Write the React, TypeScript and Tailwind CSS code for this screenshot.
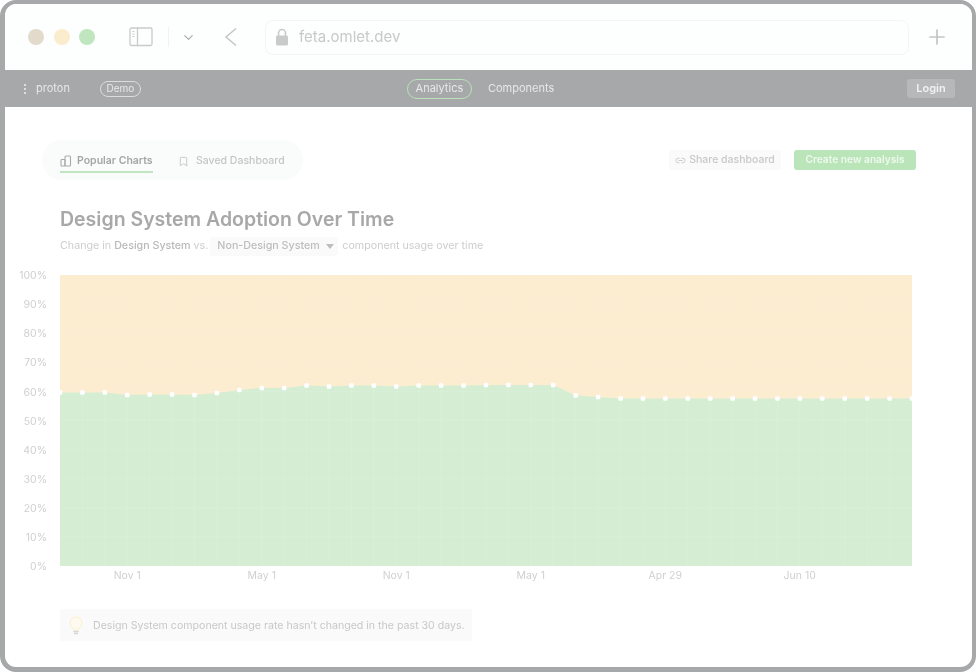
import { Bookmark, ChevronDown, Link2, Plus } from "lucide-react";

const chartValues = [
  392.5, 392.5, 392.5, 395, 394.5, 394.5, 395, 393, 390, 388, 388, 385.5, 386.5, 385.5, 385.5, 386.5, 385.5,
  385.5, 385.5, 385, 385, 385, 385, 395.5, 397, 398.5, 398.5, 398.5, 398.5, 398.5, 398.5, 398.5, 398.5, 398.5,
  398.5, 398.5, 398.5, 398.5, 398.5,
];
const yLabels = ["100%", "90%", "80%", "70%", "60%", "50%", "40%", "30%", "20%", "10%", "0%"];
const xLabels = ["Nov 1", "May 1", "Nov 1", "May 1", "Apr 29", "Jun 10"];

const CHART_W = 852;
const CHART_H = 291;
const STEP = CHART_W / 38;
const TOP = 275;

function AdoptionChart() {
  const points = chartValues.map((y, i) => [i * STEP, y - TOP]);
  const line = points.map(([x, y]) => `${x},${y}`).join(" ");
  return (
    <svg width={CHART_W + 4} height={CHART_H} viewBox={`0 0 ${CHART_W + 4} ${CHART_H}`} className="block overflow-visible">
      <rect width={CHART_W} height={CHART_H} fill="#fcecd0" />
      <polygon points={`0,${CHART_H} ${line} ${CHART_W},${CHART_H}`} fill="#d5eed3" />
      {points.map(([x], i) => (
        <line key={i} x1={x} x2={x} y1={0} y2={CHART_H} stroke="#ffffff" strokeOpacity={0.1} />
      ))}
      {yLabels.map((_, i) => (
        <line key={i} x1={0} x2={CHART_W} y1={(CHART_H / 10) * i} y2={(CHART_H / 10) * i} stroke="#ffffff" strokeOpacity={0.1} />
      ))}
      {points.map(([x, y], i) => (
        <rect key={i} x={x - 2.25} y={y - 2.25} width={4.5} height={4.5} rx={1} fill="#ffffff" />
      ))}
    </svg>
  );
}

function SidebarIcon() {
  return (
    <svg width="24" height="20" viewBox="0 0 24 20" fill="none" stroke="#c9caca" strokeWidth="1.3">
      <rect x="1" y="1" width="22" height="17.5" rx="1.5" />
      <path d="M8.5 1v17.5" />
      <path d="M3.5 4.5h2M3.5 7h2M3.5 9.500h2" strokeWidth="1" />
    </svg>
  );
}

function LockIcon() {
  return (
    <svg width="14" height="18" viewBox="0 0 14 18" fill="none">
      <path d="M3.500 8V5a3.500 3.500 0 0 1 7 0v3" stroke="#c9caca" strokeWidth="1.600" />
      <rect x="1" y="7.500" width="12" height="10" rx="1.500" fill="#c9caca" />
    </svg>
  );
}

function ChartIcon() {
  return (
    <svg width="12" height="12" viewBox="0 0 12 12" fill="none" stroke="#a9a9a9" strokeWidth="1.100">
      <rect x="1" y="4.500" width="4" height="6.500" rx="0.800" />
      <rect x="5" y="1" width="5.500" height="10" rx="1" />
    </svg>
  );
}

function BulbIcon() {
  return (
    <svg width="14" height="20" viewBox="0 0 14 20" fill="none">
      <path d="M7 1a6 6 0 0 0-3.500 10.800c.7.600 1 1.300 1 2.200h5c0-.9.300-1.600 1-2.200A6 6 0 0 0 7 1z" fill="#fefaf0" stroke="#fbeecd" />
      <path d="M5 15.500h4M5.500 17.500h3" stroke="#d5d5d5" strokeWidth="1.400" strokeLinecap="round" />
    </svg>
  );
}

function BrowserBar() {
  return (
    <div className="flex h-[66px] items-center bg-[#fdfefe] pl-[23px] pr-[21px]">
      <div className="flex gap-[9.500px]">
        <div className="h-4 w-4 rounded-full bg-[#e2dacb]" />
        <div className="h-4 w-4 rounded-full bg-[#fbeccd]" />
        <div className="h-4 w-4 rounded-full bg-[#bfe6bf]" />
      </div>
      <div className="ml-[34px]">
        <SidebarIcon />
      </div>
      <div className="ml-[15px] h-5 w-px bg-[#f1f2f2]" />
      <ChevronDown size={15} strokeWidth={1.8} color="#a9aaaa" className="ml-[12px]" />
      <svg width="14" height="20" viewBox="0 0 14 20" fill="none" stroke="#c4c5c5" strokeWidth="1.500" className="ml-[28px]">
        <path d="M12 1.500 2 10l10 8.500" />
      </svg>
      <div className="ml-[27px] flex h-[35px] w-[644px] items-center rounded-lg border border-[#f3f4f4] pl-[9px]">
        <LockIcon />
        <span className="ml-[10px] text-[15px] text-[#c8c9c9]">feta.omlet.dev</span>
      </div>
      <Plus size={24} strokeWidth={1.7} color="#c4c5c5" className="ml-4" />
    </div>
  );
}

function NavBar() {
  return (
    <div className="relative flex h-[37px] items-center bg-[#a7a8a9] pl-[19px] pr-[17px] text-[11px] text-[#e8e8e8]">
      <div className="flex flex-col gap-[2px]">
        <div className="h-[2px] w-[2px] bg-[#dddddd]" />
        <div className="h-[2px] w-[2px] bg-[#dddddd]" />
        <div className="h-[2px] w-[2px] bg-[#dddddd]" />
      </div>
      <span className="ml-[10px]">proton</span>
      <span className="ml-[30px] flex h-[16px] w-[41px] items-center justify-center rounded-full border border-[#dcdcdc] text-[10px]">Demo</span>
      <span className="ml-[266px] flex h-5 w-[65px] items-center justify-center rounded-full border-[1.5px] border-[#b9e3b9]">Analytics</span>
      <span className="ml-4">Components</span>
      <span className="ml-auto flex h-[19px] w-12 items-center justify-center rounded-[3px] bg-[#b7b8b9] font-semibold text-[#f1f1f1]">Login</span>
    </div>
  );
}

function Toolbar() {
  return (
    <div className="flex items-center justify-between pl-[37px] pr-[56px] pt-[33px]">
      <div className="flex h-10 w-[261px] items-start whitespace-nowrap rounded-full bg-[#fafcfb] pl-[18px] text-[10.500px] font-medium">
        <div className="flex h-[33px] w-[93px] items-center gap-[5px] border-b-[2px] border-[#bfe6bf] pt-[11px] text-[#a5a5a5]">
          <ChartIcon />
          <span className="font-semibold">Popular Charts</span>
        </div>
        <div className="ml-[25px] flex h-[33px] items-center gap-[7px] pt-[9px] text-[#c5c5c5]">
          <Bookmark size={11} color="#c5c5c5" />
          <span>Saved Dashboard</span>
        </div>
      </div>
      <div className="flex items-center gap-[13px] text-[10.500px] font-medium">
        <div className="flex h-5 w-[112px] items-center justify-center gap-[3px] rounded-[3px] bg-[#fafafa] text-[#c8c8c8]">
          <Link2 size={11} color="#c8c8c8" />
          Share dashboard
        </div>
        <div className="flex h-5 w-[122px] items-center justify-center rounded-[3px] bg-[#b9e5b9] text-[10.200px] font-semibold text-[#eef8ee]">Create new analysis</div>
      </div>
    </div>
  );
}

function ChartHeader() {
  return (
    <div className="pl-[55px] pt-[25px]">
      <h1 className="text-[19.500px] leading-[28px] font-semibold text-[#a8a8a8]">Design System Adoption Over Time</h1>
      <div className="mt-[4px] flex h-[19px] items-center whitespace-nowrap text-[10.700px] text-[#cdcdcd]">
        Change in&nbsp;<span className="font-medium text-[#b9b9b9]">Design System</span>&nbsp;vs.
        <div className="ml-[2px] flex h-[19px] w-[128px] items-center gap-[6px] rounded-[3px] bg-[#fafafa] pl-[7px] text-[#bdbdbd]">
          <span className="font-medium">Non-Design System</span>
          <span className="h-0 w-0 border-x-[4px] border-t-[5px] border-x-transparent border-t-[#bdbdbd]" />
        </div>
        <span className="ml-1">component usage over time</span>
      </div>
    </div>
  );
}

function ChartBlock() {
  return (
    <div className="mt-[19px]">
      <div className="flex">
        <div className="flex h-[291px] w-[42px] translate-y-px flex-col items-end justify-between text-[10.500px] text-[#d0d0d0]">
          {yLabels.map((label) => (
            <div key={label} className="flex h-0 items-center">
              {label}
            </div>
          ))}
        </div>
        <div className="ml-[13px]">
          <AdoptionChart />
        </div>
      </div>
      <div className="ml-[55px] mt-[3px] flex text-[10.500px] leading-[14px] text-[#d0d0d0]">
        {xLabels.map((label, i) => (
          <div key={i} className="w-[134.500px] text-center">
            {label}
          </div>
        ))}
      </div>
    </div>
  );
}

export default function App() {
  return (
    <div className="h-[672px] w-[976px] bg-white font-['Inter',sans-serif] blur-[0.4px]">
      <div className="h-full overflow-hidden rounded-[16px] border-[4px] border-b-[5px] border-l-[5px] border-[#a7a8a9] bg-white">
        <BrowserBar />
        <NavBar />
        <Toolbar />
        <ChartHeader />
        <ChartBlock />
        <div className="ml-[55px] mt-[26px] flex h-8 w-[412px] items-center gap-[10px] whitespace-nowrap bg-[#fafafa] pl-[9px] pt-[2px] text-[10.600px] text-[#c8c8c8]">
          <BulbIcon />
          Design System component usage rate hasn’t changed in the past 30 days.
        </div>
      </div>
    </div>
  );
}
